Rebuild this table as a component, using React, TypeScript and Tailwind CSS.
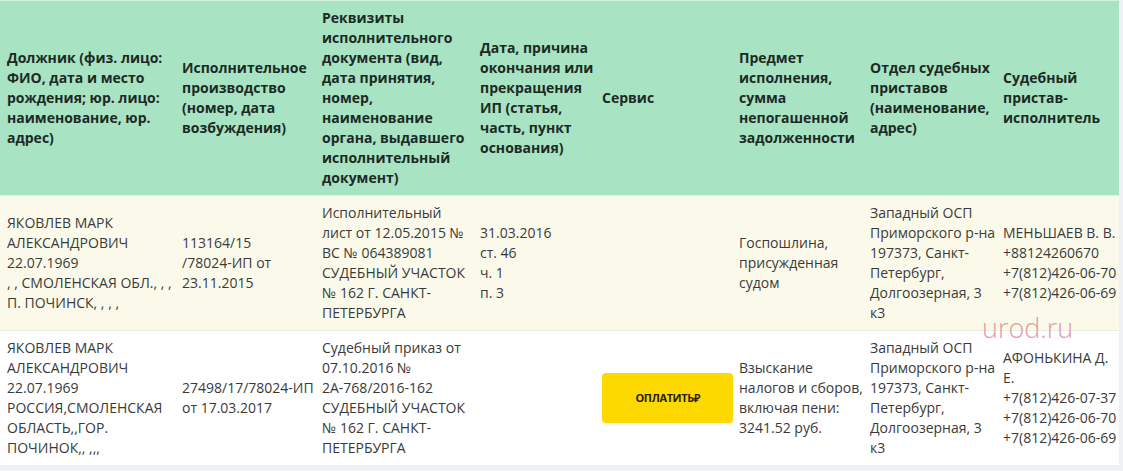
const cols = [175, 140, 158, 122, 137, 131, 133, 123];

const headers = [
  ["Должник (физ. лицо:", "ФИО, дата и место", "рождения; юр. лицо:", "наименование, юр.", "адрес)"],
  ["Исполнительное", "производство", "(номер, дата", "возбуждения)"],
  [
    "Реквизиты",
    "исполнительного",
    "документа (вид,",
    "дата принятия,",
    "номер,",
    "наименование",
    "органа, выдавшего",
    "исполнительный",
    "документ)",
  ],
  ["Дата, причина", "окончания или", "прекращения", "ИП (статья,", "часть, пункт", "основания)"],
  ["Сервис"],
  ["Предмет", "исполнения,", "сумма", "непогашенной", "задолженности"],
  ["Отдел судебных", "приставов", "(наименование,", "адрес)"],
  ["Судебный", "пристав-", "исполнитель"],
];

const osp = ["Западный ОСП", "Приморского р-на", "197373, Санкт-", "Петербург,", "Долгоозерная, 3", "к3"];

type Row = { bg: string; cells: (string[] | "pay")[] };

const rows: Row[] = [
  {
    bg: "bg-[#fbfaea]",
    cells: [
      ["ЯКОВЛЕВ МАРК", "АЛЕКСАНДРОВИЧ", "22.07.1969", ", , СМОЛЕНСКАЯ ОБЛ., , ,", "П. ПОЧИНСК, , , ,"],
      ["113164/15", "/78024-ИП от", "23.11.2015"],
      ["Исполнительный", "лист от 12.05.2015 №", "ВС № 064389081", "СУДЕБНЫЙ УЧАСТОК", "№ 162 Г. САНКТ-", "ПЕТЕРБУРГА"],
      ["31.03.2016", "ст. 46", "ч. 1", "п. 3"],
      [],
      ["Госпошлина,", "присужденная", "судом"],
      osp,
      ["МЕНЬШАЕВ В. В.", "+88124260670", "+7(812)426-06-70", "+7(812)426-06-69"],
    ],
  },
  {
    bg: "bg-white",
    cells: [
      ["ЯКОВЛЕВ МАРК", "АЛЕКСАНДРОВИЧ", "22.07.1969", "РОССИЯ,СМОЛЕНСКАЯ", "ОБЛАСТЬ,,ГОР.", "ПОЧИНОК,, ,,,"],
      ["27498/17/78024-ИП", "от 17.03.2017"],
      ["Судебный приказ от", "07.10.2016 №", "2А-768/2016-162", "СУДЕБНЫЙ УЧАСТОК", "№ 162 Г. САНКТ-", "ПЕТЕРБУРГА"],
      [],
      "pay",
      ["Взыскание", "налогов и сборов,", "включая пени:", "3241.52 руб."],
      osp,
      ["АФОНЬКИНА Д.", "Е.", "+7(812)426-07-37", "+7(812)426-06-70", "+7(812)426-06-69"],
    ],
  },
];

function Lines({ lines }: { lines: string[] }) {
  return (
    <>
      {lines.map((l, i) => (
        <div key={i} className="whitespace-nowrap">
          {l}
        </div>
      ))}
    </>
  );
}

export default function App() {
  return (
    <div className="min-h-[471px] w-[1123px] bg-[#eef1f3] font-['Open_Sans',sans-serif] text-[14px] leading-[20px]">
      <div className="relative w-[1119px]">
        <table className="w-[1119px] table-fixed border-collapse">
          <colgroup>
            {cols.map((w, i) => (
              <col key={i} style={{ width: w }} />
            ))}
          </colgroup>
          <thead>
            <tr className="bg-[#a8e3c4] border-t border-[#d2efe0]">
              {headers.map((h, i) => (
                <th
                  key={i}
                  className="py-[7px] pl-[7px] pr-[1px] text-left align-middle font-bold text-[#1c2a24]"
                >
                  <Lines lines={h} />
                </th>
              ))}
            </tr>
          </thead>
          <tbody>
            {rows.map((r, ri) => (
              <tr key={ri} className={`${r.bg} border-t border-[#e6efe6]`}>
                {r.cells.map((c, ci) => (
                  <td key={ci} className="py-[7px] pl-[7px] pr-[1px] align-middle text-[#3a3a3a]">
                    {c === "pay" ? (
                      <button className="flex h-[50px] w-[131px] items-center justify-center rounded-[4px] bg-[#fdd900] text-[11px] font-bold tracking-[-0.4px] text-[#2b2100] shadow-[0_1px_2px_rgba(0,0,0,0.08)]">
                        ОПЛАТИТЬ₽
                      </button>
                    ) : (
                      <Lines lines={c} />
                    )}
                  </td>
                ))}
              </tr>
            ))}
          </tbody>
        </table>
        <div className="pointer-events-none absolute left-[982px] top-[311px] font-['Open_Sans',sans-serif] text-[27px] font-light leading-[34px] text-[#e2838f] opacity-80">
          urod.ru
        </div>
      </div>
    </div>
  );
}
